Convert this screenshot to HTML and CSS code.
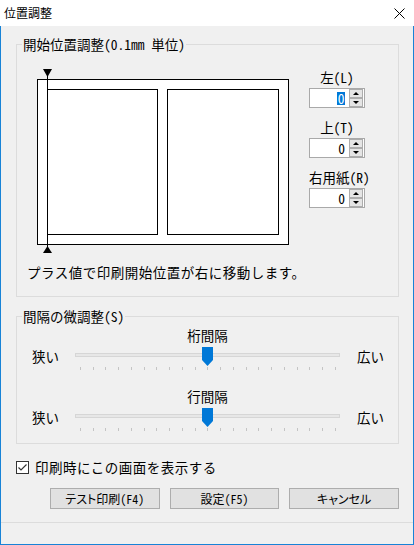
FILE: index.html
```html
<!DOCTYPE html>
<html lang="ja">
<head>
    <meta charset="UTF-8">
    <title>位置調整</title>
    <link rel="stylesheet" href="styles.css">
</head>
<body>

    <div class="window">
        <div class="titlebar">
            <span class="title">位置調整</span>
            <svg class="close" width="11" height="11" viewBox="0 0 11 11">
                <path d="M0.5 0.5L10.5 10.5M10.5 0.5L0.5 10.5" stroke="#000" stroke-width="1"/>
            </svg>
        </div>

        <div class="frame">
            <div class="dialog">

                <!-- start position -->
                <fieldset class="group group-start">
                    <legend>開始位置調整(0.1mm 単位)</legend>
                    <div class="preview-row">
                        <svg class="preview" width="256" height="190" viewBox="0 0 256 190">
                            <rect x="1.5" y="13.5" width="251" height="165" fill="#fff" stroke="#000"/>
                            <rect x="11.5" y="23.5" width="110" height="145" fill="#fff" stroke="#000"/>
                            <rect x="131.5" y="23.5" width="111" height="145" fill="#fff" stroke="#000"/>
                            <path d="M11.5 10V181" stroke="#000"/>
                            <polygon points="7,3 16,3 11.5,11" fill="#000"/>
                            <polygon points="7,187 16,187 11.5,180" fill="#000"/>
                        </svg>

                        <div class="spinners">
                            <div class="spin-field">
                                <div class="spin-label">左(L)</div>
                                <div class="spin">
                                    <div class="spin-value"><span class="selected">0</span></div>
                                    <svg class="spin-btns" width="15" height="18" viewBox="0 0 15 18">
                                        <rect x="0.5" y="0.5" width="13" height="8" fill="#e5e5e5" stroke="#adadad"/>
                                        <rect x="0.5" y="9.5" width="13" height="8" fill="#e5e5e5" stroke="#adadad"/>
                                        <polygon points="4,6 10,6 7,3" fill="#000"/>
                                        <polygon points="4,12 10,12 7,15" fill="#000"/>
                                    </svg>
                                </div>
                            </div>
                            <div class="spin-field">
                                <div class="spin-label">上(T)</div>
                                <div class="spin">
                                    <div class="spin-value">0</div>
                                    <svg class="spin-btns" width="15" height="18" viewBox="0 0 15 18">
                                        <rect x="0.5" y="0.5" width="13" height="8" fill="#e5e5e5" stroke="#adadad"/>
                                        <rect x="0.5" y="9.5" width="13" height="8" fill="#e5e5e5" stroke="#adadad"/>
                                        <polygon points="4,6 10,6 7,3" fill="#000"/>
                                        <polygon points="4,12 10,12 7,15" fill="#000"/>
                                    </svg>
                                </div>
                            </div>
                            <div class="spin-field">
                                <div class="spin-label">右用紙(R)</div>
                                <div class="spin">
                                    <div class="spin-value">0</div>
                                    <svg class="spin-btns" width="15" height="18" viewBox="0 0 15 18">
                                        <rect x="0.5" y="0.5" width="13" height="8" fill="#e5e5e5" stroke="#adadad"/>
                                        <rect x="0.5" y="9.5" width="13" height="8" fill="#e5e5e5" stroke="#adadad"/>
                                        <polygon points="4,6 10,6 7,3" fill="#000"/>
                                        <polygon points="4,12 10,12 7,15" fill="#000"/>
                                    </svg>
                                </div>
                            </div>
                        </div>
                    </div>
                    <p class="hint">プラス値で印刷開始位置が右に移動します。</p>
                </fieldset>

                <!-- spacing -->
                <fieldset class="group group-spacing">
                    <legend>間隔の微調整(S)</legend>

                    <div class="slider-block">
                        <div class="slider-title">桁間隔</div>
                        <div class="slider-row">
                            <span class="end-label">狭い</span>
                            <svg class="slider" width="265" height="30" viewBox="0 0 265 30">
                                <rect x="0.5" y="10.5" width="264" height="3" fill="#e7e7e7" stroke="#d6d6d6"/>
                                <path d="M5.5 24v3M18.5 24v3M30.5 24v3M43.5 24v3M56.5 24v3M69.5 24v3M81.5 24v3M94.5 24v3M107.5 24v3M120.5 24v3M132.5 24v3M145.5 24v3M158.5 24v3M171.5 24v3M183.5 24v3M196.5 24v3M209.5 24v3M222.5 24v3M234.5 24v3M247.5 24v3M260.5 24v3" stroke="#c4c4c4"/>
                                <path d="M127 4H138V17L132.5 23L127 17Z" fill="#0078d7"/>
                            </svg>
                            <span class="end-label end-right">広い</span>
                        </div>
                    </div>

                    <div class="slider-block">
                        <div class="slider-title">行間隔</div>
                        <div class="slider-row">
                            <span class="end-label">狭い</span>
                            <svg class="slider" width="265" height="30" viewBox="0 0 265 30">
                                <rect x="0.5" y="10.5" width="264" height="3" fill="#e7e7e7" stroke="#d6d6d6"/>
                                <path d="M5.5 24v3M18.5 24v3M30.5 24v3M43.5 24v3M56.5 24v3M69.5 24v3M81.5 24v3M94.5 24v3M107.5 24v3M120.5 24v3M132.5 24v3M145.5 24v3M158.5 24v3M171.5 24v3M183.5 24v3M196.5 24v3M209.5 24v3M222.5 24v3M234.5 24v3M247.5 24v3M260.5 24v3" stroke="#c4c4c4"/>
                                <path d="M127 4H138V17L132.5 23L127 17Z" fill="#0078d7"/>
                            </svg>
                            <span class="end-label end-right">広い</span>
                        </div>
                    </div>
                </fieldset>

                <label class="check-row">
                    <svg class="checkbox" width="13" height="13" viewBox="0 0 13 13">
                        <rect x="0.5" y="0.5" width="12" height="12" fill="#fff" stroke="#333"/>
                        <path d="M2.5 6.5L5 9L10.5 3.5" fill="none" stroke="#333" stroke-width="1.2"/>
                    </svg>
                    <span>印刷時にこの画面を表示する</span>
                </label>

                <div class="buttons">
                    <button type="button">テスト印刷(F4)</button>
                    <button type="button">設定(F5)</button>
                    <button type="button">キャンセル</button>
                </div>

            </div>
            <div class="footer"></div>
        </div>
    </div>

</body>
</html>
```

FILE: styles.css
```css
body {
    margin: 0;
    font-family: "Noto Sans CJK JP", sans-serif;
    font-size: 13.5px;
    line-height: 16px;
    font-feature-settings: "hwid" 1;
    color: #000;
    background: #fff;
}
.window {
    width: 414px;
    height: 545px;
    display: flex;
    flex-direction: column;
}
.titlebar {
    height: 26px;
    flex: none;
    display: flex;
    align-items: center;
    justify-content: space-between;
    padding: 0 9px 0 4px;
    background: #fff;
    font-size: 12px;
}
.close {
    display: block;
}
.frame {
    flex: 1;
    display: flex;
    flex-direction: column;
    border: 1px solid #1883d7;
    border-top: none;
    background: #f0f0f0;
}
.dialog {
    flex: 1;
    padding: 10px 14px 0 15px;
}
.footer {
    height: 21px;
    border-top: 1px solid #dcdcdc;
}
.group {
    margin: 0;
    padding: 0;
    min-width: 0;
    border: 1px solid #dcdcdc;
}
.group legend {
    margin-left: 5px;
    padding: 0 1px;
    line-height: 16px;
}
.preview-row {
    display: flex;
    align-items: flex-start;
    padding: 14px 0 0 19px;
}
.preview {
    display: block;
    flex: none;
}
.spinners {
    margin: 3px 0 0 17px;
    width: 56px;
}
.spin-field {
    margin-bottom: 11px;
}
.spin-label {
    text-align: center;
    margin-bottom: 3px;
    white-space: nowrap;
}
.spin {
    height: 20px;
    box-sizing: border-box;
    border: 1px solid #a9a9a9;
    background: #fff;
    display: flex;
}
.spin-value {
    flex: 1;
    text-align: right;
    padding-right: 4px;
    line-height: 18px;
}
.selected {
    display: inline-block;
    line-height: 13px;
    padding: 0 0.5px;
    background: #0078d7;
    color: #fff;
}
.spin-btns {
    display: block;
    flex: none;
}
.hint {
    margin: 8px 0 0;
    padding: 0 0 16px 10px;
    letter-spacing: 0.5px;
}
.group-spacing {
    margin-top: 11px;
    padding: 3px 0 9px;
}
.slider-block + .slider-block {
    margin-top: 15px;
}
.slider-title {
    text-align: center;
}
.slider-row {
    display: flex;
    align-items: flex-start;
    padding-left: 15px;
}
.end-label {
    width: 43px;
    padding-top: 5px;
}
.end-right {
    width: auto;
    margin-left: 17px;
}
.slider {
    display: block;
    flex: none;
}
.check-row {
    display: flex;
    align-items: center;
    margin-top: 15px;
    height: 16px;
    letter-spacing: 0.5px;
}
.checkbox {
    display: block;
    margin-right: 6px;
}
.buttons {
    display: flex;
    gap: 10px;
    margin: 13px 0 0 34px;
}
.buttons button {
    width: 110px;
    height: 21px;
    padding: 0;
    border: 1px solid #adadad;
    background: #e1e1e1;
    font-family: "Noto Sans CJK JP", sans-serif;
    font-size: 12px;
    line-height: 19px;
    font-feature-settings: "hwid" 1, "palt" 1;
    color: #000;
}
```
